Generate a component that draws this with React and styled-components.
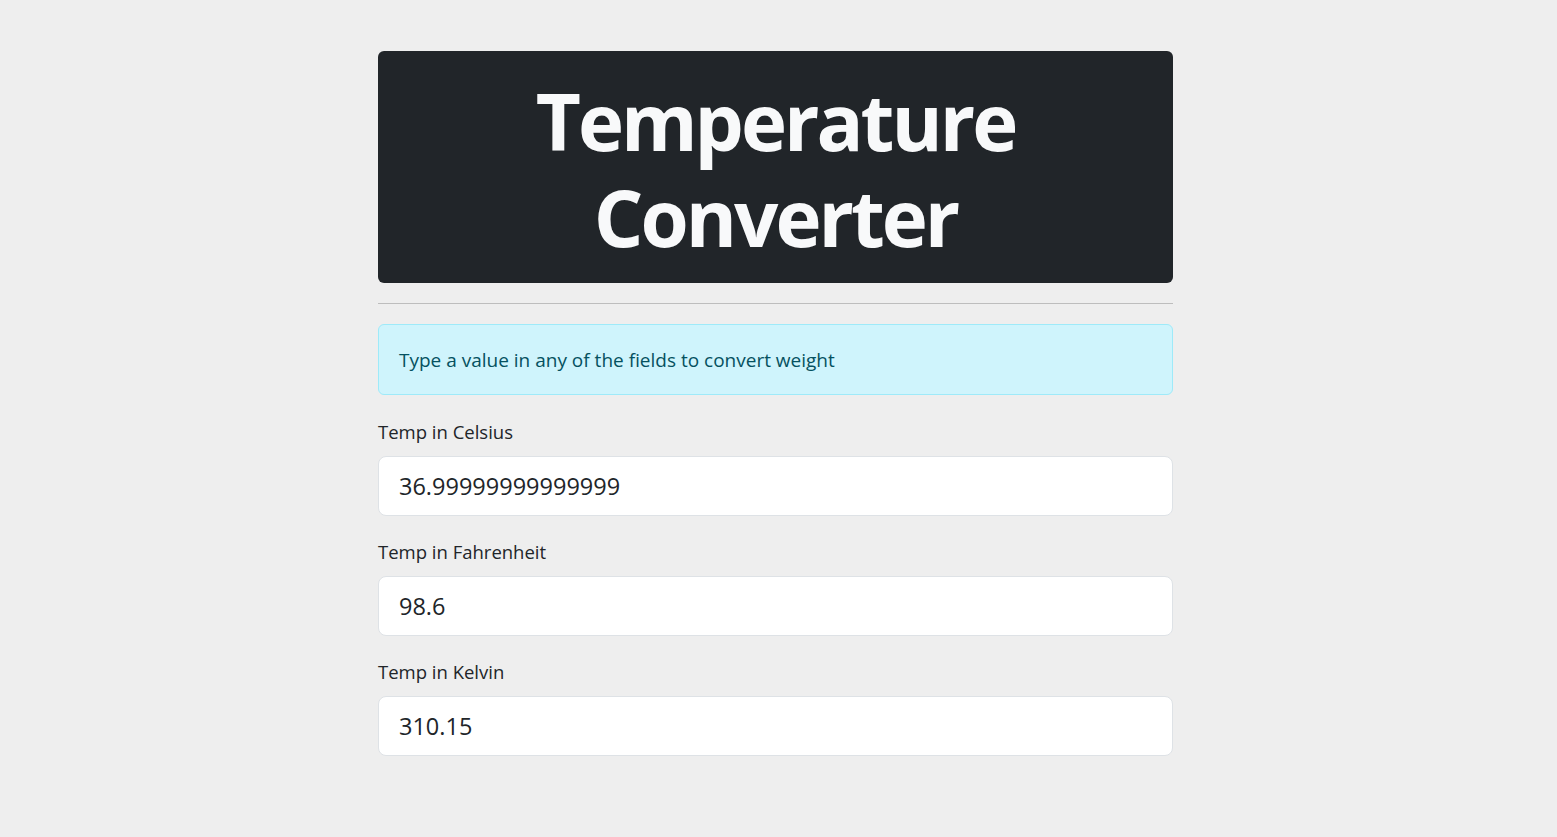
import styled, { createGlobalStyle } from 'styled-components';
import { useState } from 'react';

const GlobalStyle = createGlobalStyle`
  body {
    margin: 0;
    background-color: #eeeeee;
    font-family: "Open Sans", "Noto Sans", sans-serif;
    color: #212529;
  }
`;

const Page = styled.div`
  display: flex;
  justify-content: center;
  padding: 51px 6px 40px 0;
`;

const Container = styled.div`
  width: 795px;
  display: flex;
  flex-direction: column;
`;

const Header = styled.div`
  background-color: #212529;
  border-radius: 6px;
  padding: 22px 0 18px;
  text-align: center;
`;

const Title = styled.h1`
  margin: 0;
  color: #f8f9fa;
  font-size: 78px;
  font-weight: 700;
  line-height: 96px;
  letter-spacing: -3px;
`;

const Divider = styled.hr`
  margin: 20px 0;
  border: 0;
  border-top: 1px solid #bdbdbd;
`;

const Alert = styled.div`
  background-color: #cff4fc;
  border: 1px solid #9eeaf9;
  border-radius: 6px;
  color: #055160;
  padding: 23px 20px 22px;
  font-size: 19px;
  line-height: 24px;
`;

const Field = styled.div`
  display: flex;
  flex-direction: column;
  margin-top: ${(props) => (props.first ? '25px' : '24px')};
`;

const Label = styled.label`
  font-size: 18.5px;
  line-height: 24px;
  margin-bottom: 12px;
  color: #212529;
`;

const Input = styled.input`
  box-sizing: border-box;
  height: 60px;
  padding: 0 20px;
  font-family: inherit;
  font-size: 23.5px;
  color: #212529;
  background: #fff;
  border: 1px solid #dee2e6;
  border-radius: 8px;
  outline: none;
`;

const fields = [
  { key: 'c', label: 'Temp in Celsius', value: '36.99999999999999' },
  { key: 'f', label: 'Temp in Fahrenheit', value: '98.6' },
  { key: 'k', label: 'Temp in Kelvin', value: '310.15' },
];

const App = () => {
  const [values, setValues] = useState(
    Object.fromEntries(fields.map((f) => [f.key, f.value]))
  );

  return (
    <>
      <GlobalStyle />
      <Page>
        <Container>
          <Header>
            <Title>Temperature Converter</Title>
          </Header>
          <Divider />
          <Alert>Type a value in any of the fields to convert weight</Alert>
          {fields.map((f, i) => (
            <Field key={f.key} first={i === 0}>
              <Label htmlFor={f.key}>{f.label}</Label>
              <Input
                id={f.key}
                type="text"
                value={values[f.key]}
                onChange={(e) => setValues({ ...values, [f.key]: e.target.value })}
              />
            </Field>
          ))}
        </Container>
      </Page>
    </>
  );
};

export default App;
